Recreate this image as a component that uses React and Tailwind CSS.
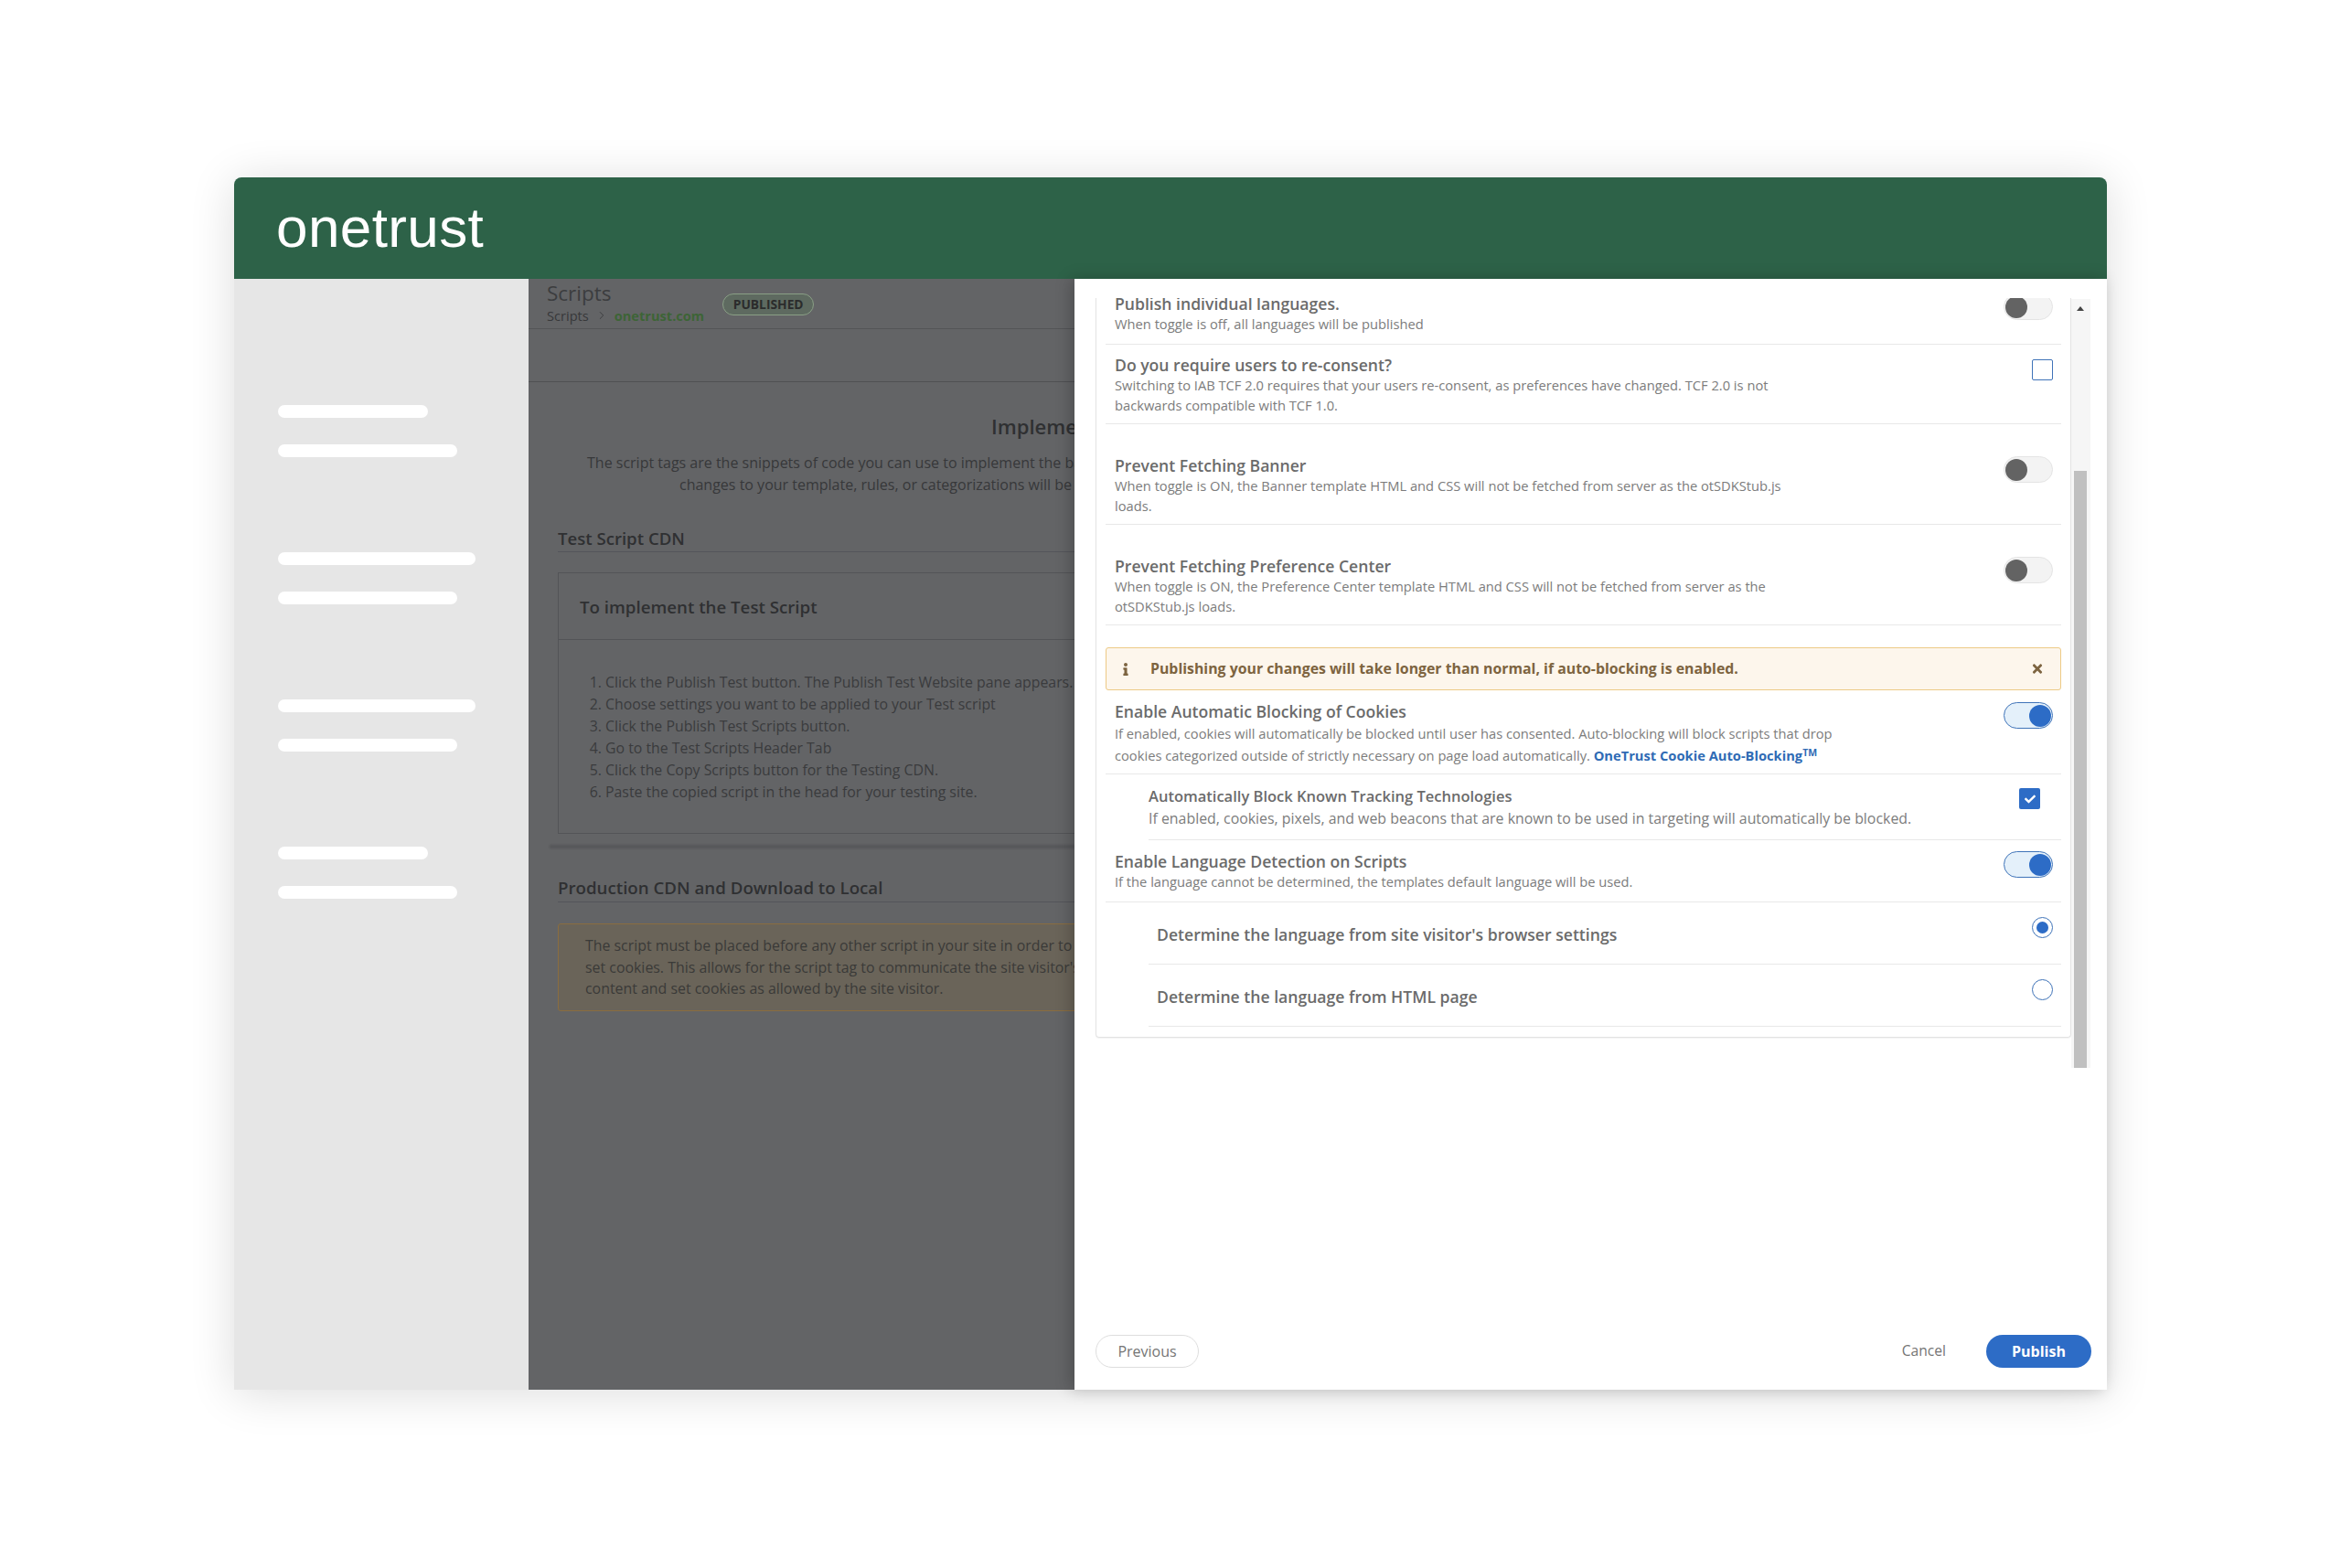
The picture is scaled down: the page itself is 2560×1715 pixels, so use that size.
import React from "react";
import { FaInfo, FaTimes, FaCheck } from "react-icons/fa";
import { ChevronRight } from "lucide-react";

const SANS = "font-['Open_Sans',sans-serif]";

function Toggle({ on, className = "" }) {
  return (
    <div
      className={`flex h-[29px] w-[54px] shrink-0 items-center rounded-full border px-px ${
        on ? "justify-end border-[#3f73b8] bg-[#e4f0fa]" : "justify-start border-[#e4e4e4] bg-[#f3f3f3]"
      } ${className}`}
    >
      <div className={`h-6 w-6 rounded-full ${on ? "bg-[#2d6cc6]" : "bg-[#636363]"}`} />
    </div>
  );
}

function Title({ children, className = "text-[17.6px]" }) {
  return <div className={`leading-[22px] font-semibold whitespace-nowrap text-[#6b6b6b] ${className}`}>{children}</div>;
}

function Desc({ children, tall, className = "text-[14.7px]" }) {
  return (
    <div className={`mt-px whitespace-nowrap text-[#7c7c7c] ${tall ? "leading-[24px]" : "leading-[21.5px]"} ${className}`}>
      {children}
    </div>
  );
}

function Row({ className, children }) {
  return <div className={`flex items-start justify-between border-b border-[#e8e8e8] ${className}`}>{children}</div>;
}

function Bar({ className }) {
  return <div className={`h-[14px] rounded-full bg-white ${className}`} />;
}

function Radio({ on }) {
  return (
    <div className="mt-4 flex h-[23px] w-[23px] items-center justify-center rounded-full border border-[#3f73b8] bg-white">
      {on && <div className="h-[13px] w-[13px] rounded-full bg-[#2d6cc6]" />}
    </div>
  );
}

export default function App() {
  return (
    <div className={`h-[1715px] w-[2560px] overflow-hidden bg-white pt-[194px] pl-[256px] ${SANS}`}>
      <div className="flex h-[1326px] w-[2048px] flex-col rounded-t-[8px] shadow-[0_4px_50px_rgba(0,0,0,0.14)]">
        <header className="flex h-[111px] shrink-0 items-center rounded-t-[8px] bg-[#2d6248] pl-[46px]">
          <span className="mt-[-1px] font-['Liberation_Sans',sans-serif] text-[62px] leading-none tracking-[0.4px] text-white">onetrust</span>
        </header>

        <div className="flex min-h-0 flex-1">
          {/* Sidebar */}
          <aside className="flex w-[322px] shrink-0 flex-col bg-[#e6e6e6] pt-[138px] pl-[48px]">
            <Bar className="w-[164px]" />
            <Bar className="mt-[29px] w-[196px]" />
            <Bar className="mt-[104px] w-[216px]" />
            <Bar className="mt-[29px] w-[196px]" />
            <Bar className="mt-[104px] w-[216px]" />
            <Bar className="mt-[29px] w-[196px]" />
            <Bar className="mt-[104px] w-[164px]" />
            <Bar className="mt-[29px] w-[196px]" />
          </aside>

          {/* Dimmed page */}
          <section className="w-[597px] shrink-0 overflow-hidden bg-[#636466] text-[#37383a]">
            <div className="flex h-[55px] items-start gap-[20px] border-b border-[#535457] pl-5">
              <div className="whitespace-nowrap">
                <div className="mt-[1px] text-[22.5px] leading-[30px] text-[#3c3d3f]">Scripts</div>
                <div className="mt-[-1px] flex items-center text-[14.6px] leading-[20px]">
                  <span>Scripts</span>
                  <ChevronRight className="mx-[7px] h-[14px] w-[14px]" strokeWidth={1.5} />
                  <span className="font-bold text-[#3d6436]">onetrust.com</span>
                </div>
              </div>
              <div className="mt-[16px] flex h-[24px] w-[100px] items-center justify-center rounded-full border border-[#8a9f86] bg-[#5e6a60] text-[13.8px] font-bold text-[#2b2c2c]">
                PUBLISHED
              </div>
            </div>
            <div className="h-[58px] border-b border-[#4f5053]" />

            <div className="mt-[33px] pl-[506px] text-[22px] leading-[30px] font-semibold whitespace-nowrap text-[#2f3032]">Implement Scripts</div>
            <div className="mt-[14px] pl-[64px] text-[16px] leading-[23.5px] whitespace-nowrap">The script tags are the snippets of code you can use to implement the banner</div>
            <div className="pl-[165px] text-[16px] leading-[23.5px] whitespace-nowrap">changes to your template, rules, or categorizations will be published</div>

            <div className="mt-[33px] ml-8">
              <div className="h-[29px] border-b border-[#54555a] pt-[1px] text-[18.6px] leading-[26px] font-semibold whitespace-nowrap text-[#2f3032]">Test Script CDN</div>
              <div className="mt-[22px] h-[286px] w-[600px] border border-[#535457]">
                <div className="flex h-[73px] items-center border-b border-[#535457] pt-[2px] pl-[23px] text-[18.7px] font-semibold whitespace-nowrap text-[#2f3032]">To implement the Test Script</div>
                <ol className="mt-[35px] list-decimal pl-[51px] text-[15.85px] leading-[23.9px] whitespace-nowrap text-[#3a3b3d]">
                  <li>Click the Publish Test button. The Publish Test Website pane appears.</li>
                  <li>Choose settings you want to be applied to your Test script</li>
                  <li>Click the Publish Test Scripts button.</li>
                  <li>Go to the Test Scripts Header Tab</li>
                  <li>Click the Copy Scripts button for the Testing CDN.</li>
                  <li>Paste the copied script in the head for your testing site.</li>
                </ol>
              </div>
            </div>
            <div className="mt-[12px] ml-[23px] h-[4px] bg-[#56575a] blur-[1px]" />
            <div className="mt-[30px] ml-8">
              <div className="h-[29px] border-b border-[#54555a] text-[18.7px] leading-[26px] font-semibold whitespace-nowrap text-[#2f3032]">Production CDN and Download to Local</div>
              <div className="mt-[23px] h-[96px] w-[600px] rounded-[3px] border border-[#8a6d40] bg-[#6a6459] pt-[12px] pl-[29px] text-[15.9px] leading-[23.7px] whitespace-nowrap text-[#3a3a38]">
                <div>The script must be placed before any other script in your site in order to</div>
                <div>set cookies. This allows for the script tag to communicate the site visitor's</div>
                <div>content and set cookies as allowed by the site visitor.</div>
              </div>
            </div>
          </section>

          {/* Publish panel */}
          <section className="relative z-10 flex min-w-0 flex-1 flex-col bg-white shadow-[-4px_0_16px_rgba(0,0,0,0.22)]">
            <div className="flex min-h-0 flex-1 items-start pt-[21px] pl-[23px]">
              <div className="h-[809px] w-[1067px] shrink-0 overflow-hidden rounded-b-[4px] border-x border-b border-[#e3e3e3] shadow-[0_1px_1px_rgba(0,0,0,0.05)]">
                <div className="mt-[-5px] px-[10px]">
                  <Row className="h-[56px] pr-[9px] pl-[10px]">
                    <div>
                      <Title>Publish individual languages.</Title>
                      <Desc>When toggle is off, all languages will be published</Desc>
                    </div>
                    <Toggle />
                  </Row>
                  <Row className="h-[87px] pr-[9px] pl-[10px]">
                    <div className="pt-[11px]">
                      <Title>Do you require users to re-consent?</Title>
                      <Desc>
                        Switching to IAB TCF 2.0 requires that your users re-consent, as preferences have changed. TCF 2.0 is not
                        <br />
                        backwards compatible with TCF 1.0.
                      </Desc>
                    </div>
                    <div className="mt-4 h-[23px] w-[23px] rounded-[2px] border-[1.5px] border-[#3f73b8]" />
                  </Row>
                  <Row className="h-[110px] pr-[9px] pl-[10px]">
                    <div className="pt-[34px]">
                      <Title>Prevent Fetching Banner</Title>
                      <Desc>
                        When toggle is ON, the Banner template HTML and CSS will not be fetched from server as the otSDKStub.js
                        <br />
                        loads.
                      </Desc>
                    </div>
                    <Toggle className="mt-[35px]" />
                  </Row>
                  <Row className="h-[110px] pr-[9px] pl-[10px]">
                    <div className="pt-[34px]">
                      <Title>Prevent Fetching Preference Center</Title>
                      <Desc>
                        When toggle is ON, the Preference Center template HTML and CSS will not be fetched from server as the
                        <br />
                        otSDKStub.js loads.
                      </Desc>
                    </div>
                    <Toggle className="mt-[35px]" />
                  </Row>

                  <div className="mt-[24px] flex h-[47px] items-center rounded-[3px] border border-[#edca86] bg-[#fdf6ec] pr-[18px] pl-[17px] text-[#7d6440]">
                    <FaInfo className="mr-[23px] h-[14px] w-[8px]" />
                    <span className="flex-1 text-[15.85px] font-bold whitespace-nowrap">Publishing your changes will take longer than normal, if auto-blocking is enabled.</span>
                    <FaTimes className="h-[15px] w-[14px]" />
                  </div>

                  <Row className="h-[92px] pr-[9px] pl-[10px]">
                    <div className="pt-[12px]">
                      <Title>Enable Automatic Blocking of Cookies</Title>
                      <Desc tall>
                        If enabled, cookies will automatically be blocked until user has consented. Auto-blocking will block scripts that drop
                        <br />
                        cookies categorized outside of strictly necessary on page load automatically.{" "}
                        <span className="font-bold text-[#2f6bb5]">
                          OneTrust Cookie Auto-Blocking<sup className="text-[10.5px]">TM</sup>
                        </span>
                      </Desc>
                    </div>
                    <Toggle on className="mt-[13px]" />
                  </Row>
                  <Row className="ml-[47px] h-[72px] pr-[23px]">
                    <div className="pt-[13px]">
                      <Title className="text-[16.5px]">Automatically Block Known Tracking Technologies</Title>
                      <Desc tall className="text-[15.9px]">If enabled, cookies, pixels, and web beacons that are known to be used in targeting will automatically be blocked.</Desc>
                    </div>
                    <div className="mt-[15px] flex h-[23px] w-[23px] items-center justify-center rounded-[2px] bg-[#2d6cc6] text-white">
                      <FaCheck className="h-[12px] w-[12px]" />
                    </div>
                  </Row>
                  <Row className="h-[68px] pr-[9px] pl-[10px]">
                    <div className="pt-[12px]">
                      <Title>Enable Language Detection on Scripts</Title>
                      <Desc>If the language cannot be determined, the templates default language will be used.</Desc>
                    </div>
                    <Toggle on className="mt-[12px]" />
                  </Row>
                  <Row className="ml-[47px] h-[68px] pr-[9px] pl-[9px]">
                    <div className="pt-[24px]">
                      <Title>Determine the language from site visitor's browser settings</Title>
                    </div>
                    <Radio on />
                  </Row>
                  <Row className="ml-[47px] h-[68px] pr-[9px] pl-[9px]">
                    <div className="pt-[24px]">
                      <Title>Determine the language from HTML page</Title>
                    </div>
                    <Radio />
                  </Row>
                </div>
              </div>
              {/* Scrollbar */}
              <div className="mt-px flex h-[841px] w-[21px] shrink-0 flex-col items-center bg-[#f6f6f6]">
                <svg viewBox="0 0 10 6" className="mt-[8px] mr-[2px] h-[5px] w-[8px] fill-[#444]">
                  <polygon points="5,0 10,6 0,6" />
                </svg>
                <div className="mt-[175px] mr-[1px] h-[653px] w-[14px] bg-[#c0c0c0]" />
              </div>
            </div>

            <footer className="flex items-center justify-between pr-[17px] pb-[24px] pl-[23px]">
              <button className="h-[36px] w-[113px] rounded-full border border-[#dedede] text-[16px] text-[#757575]">Previous</button>
              <div className="flex items-center gap-[44px]">
                <span className="text-[15.6px] text-[#757575]">Cancel</span>
                <button className="h-[36px] w-[115px] rounded-full bg-[#2d6cc6] text-[16px] font-bold text-white">Publish</button>
              </div>
            </footer>
          </section>
        </div>
      </div>
    </div>
  );
}
